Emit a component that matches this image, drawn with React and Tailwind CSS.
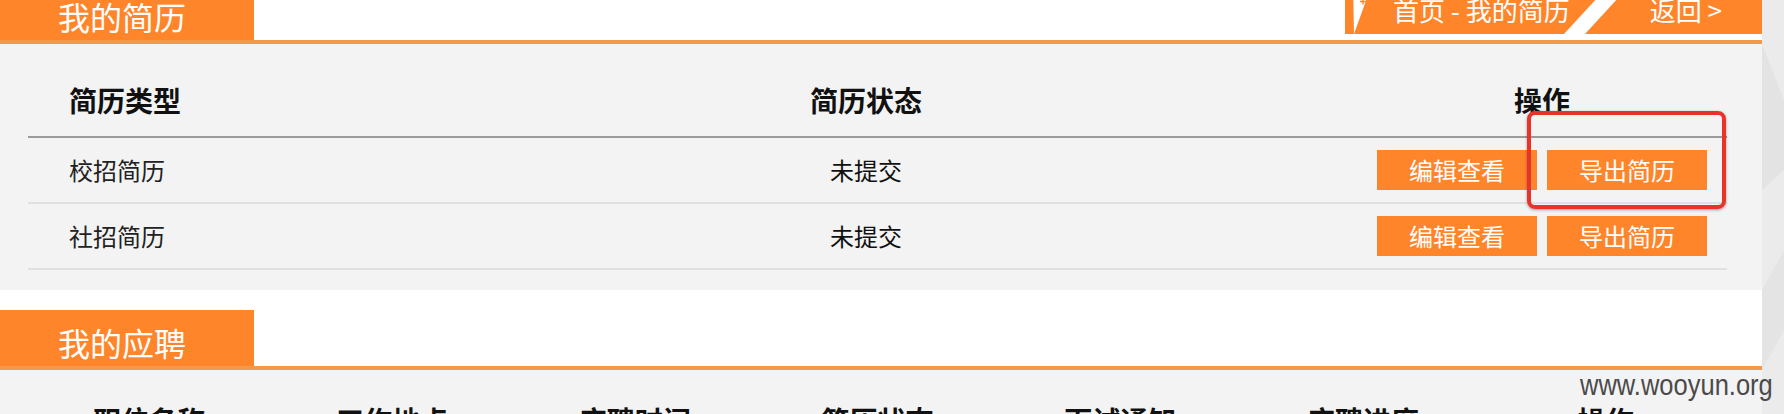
import React from "react";

const cjk = { fontFamily: '"Noto Sans CJK SC", "Noto Sans", sans-serif' };

function SectionHeader({ title, className = "", children }) {
  return (
    <div className={`flex border-b-4 border-[#f39a4a] ${className}`}>
      <div className="w-[254px] h-[56px] shrink-0 bg-[#ff852b] flex items-center pl-[58px] pt-[8px]">
        <span className="text-[32px] leading-[32px] text-white">{title}</span>
      </div>
      <div className="flex-1 flex justify-end">{children}</div>
    </div>
  );
}

function Breadcrumb() {
  return (
    <div className="relative w-[417px] h-[50px] bg-[#ff852b] flex items-center">
      <svg className="absolute left-0 top-0" width="417" height="50" viewBox="0 0 417 50">
        <polygon points="8,0 27,0 9,50" fill="#ffffff" />
        <path d="M18 14.5 V20.5 M15 17.5 H21" stroke="#ff852b" strokeWidth="1.4" />
        <polygon points="265,0 286,0 240,50 219,50" fill="#ffffff" />
      </svg>
      <span className="relative ml-[48px] pt-[1px] text-[26px] leading-[26px] text-white">首页 - 我的简历</span>
      <span className="relative ml-[80px] pt-[1px] text-[26px] leading-[26px] text-white">返回 &gt;</span>
    </div>
  );
}

function Btn({ children }) {
  return (
    <div className="w-[160px] h-[40px] bg-[#ff852b] text-white text-[24px] leading-[24px] flex items-center justify-center">
      {children}
    </div>
  );
}

const rows = [
  { type: "校招简历", status: "未提交" },
  { type: "社招简历", status: "未提交" },
];

export default function App() {
  return (
    <div className="relative w-[1784px] h-[414px] overflow-hidden bg-[#ebebeb] flex" style={cjk}>
      <div className="w-[1762px] shrink-0 bg-white h-[414px] overflow-hidden">
        <SectionHeader title="我的简历" className="-mt-[16px]">
          <Breadcrumb />
        </SectionHeader>

        <div className="bg-[#f3f3f3] pb-[20px]">
          <div className="ml-[28px] w-[1699px]">
            <div className="grid grid-cols-[343px_990px_1fr] h-[94px] pt-[20px] border-b-2 border-[#9a9a9a] items-center">
              <div className="pl-[41px] text-[28px] leading-[28px] font-bold text-[#111]">简历类型</div>
              <div className="text-center text-[28px] leading-[28px] font-bold text-[#111]">简历状态</div>
              <div className="text-center text-[28px] leading-[28px] font-bold text-[#111] pr-[4px]">操作</div>
            </div>
            {rows.map((r) => (
              <div
                key={r.type}
                className="grid grid-cols-[343px_990px_1fr] h-[66px] border-b-2 border-[#e0e0e0] items-center"
              >
                <div className="pl-[41px] text-[24px] leading-[24px] text-[#222]">{r.type}</div>
                <div className="text-center text-[24px] leading-[24px] text-[#111]">{r.status}</div>
                <div className="flex justify-center gap-[10px] pr-[4px]">
                  <Btn>编辑查看</Btn>
                  <Btn>导出简历</Btn>
                </div>
              </div>
            ))}
          </div>
        </div>

        <div className="h-[20px] bg-white" />

        <SectionHeader title="我的应聘" />

        <div className="bg-[#f3f3f3] h-[100px]">
          <div className="ml-[28px] w-[1699px] grid grid-cols-7 pt-[36px]">
            {["职位名称", "工作地点", "应聘时间", "简历状态", "面试通知", "应聘进度", "操作"].map((t) => (
              <div key={t} className="text-center text-[28px] leading-[28px] font-bold text-[#111]">
                {t}
              </div>
            ))}
          </div>
        </div>
      </div>

      <div className="relative flex-1">
        <svg className="absolute inset-0" width="22" height="414" viewBox="0 0 22 414">
          <polygon points="0,44 22,100 22,170 0,190" fill="#e3e3e3" />
          <polygon points="0,290 22,250 22,330 0,370" fill="#e4e4e4" />
        </svg>
      </div>

      <div className="absolute left-[1527px] top-[111px] w-[199px] h-[98px] border-4 border-[#e8332b] rounded-[8px] shadow-[0_1px_3px_rgba(0,0,0,0.35)]" />

      <div
        className="absolute right-[11px] top-[370px] text-[30px] leading-[30px] text-[#4a4a4a] scale-x-[0.85] origin-right"
        style={{ fontFamily: '"Liberation Sans", sans-serif' }}
      >
        www.wooyun.org
      </div>
    </div>
  );
}
